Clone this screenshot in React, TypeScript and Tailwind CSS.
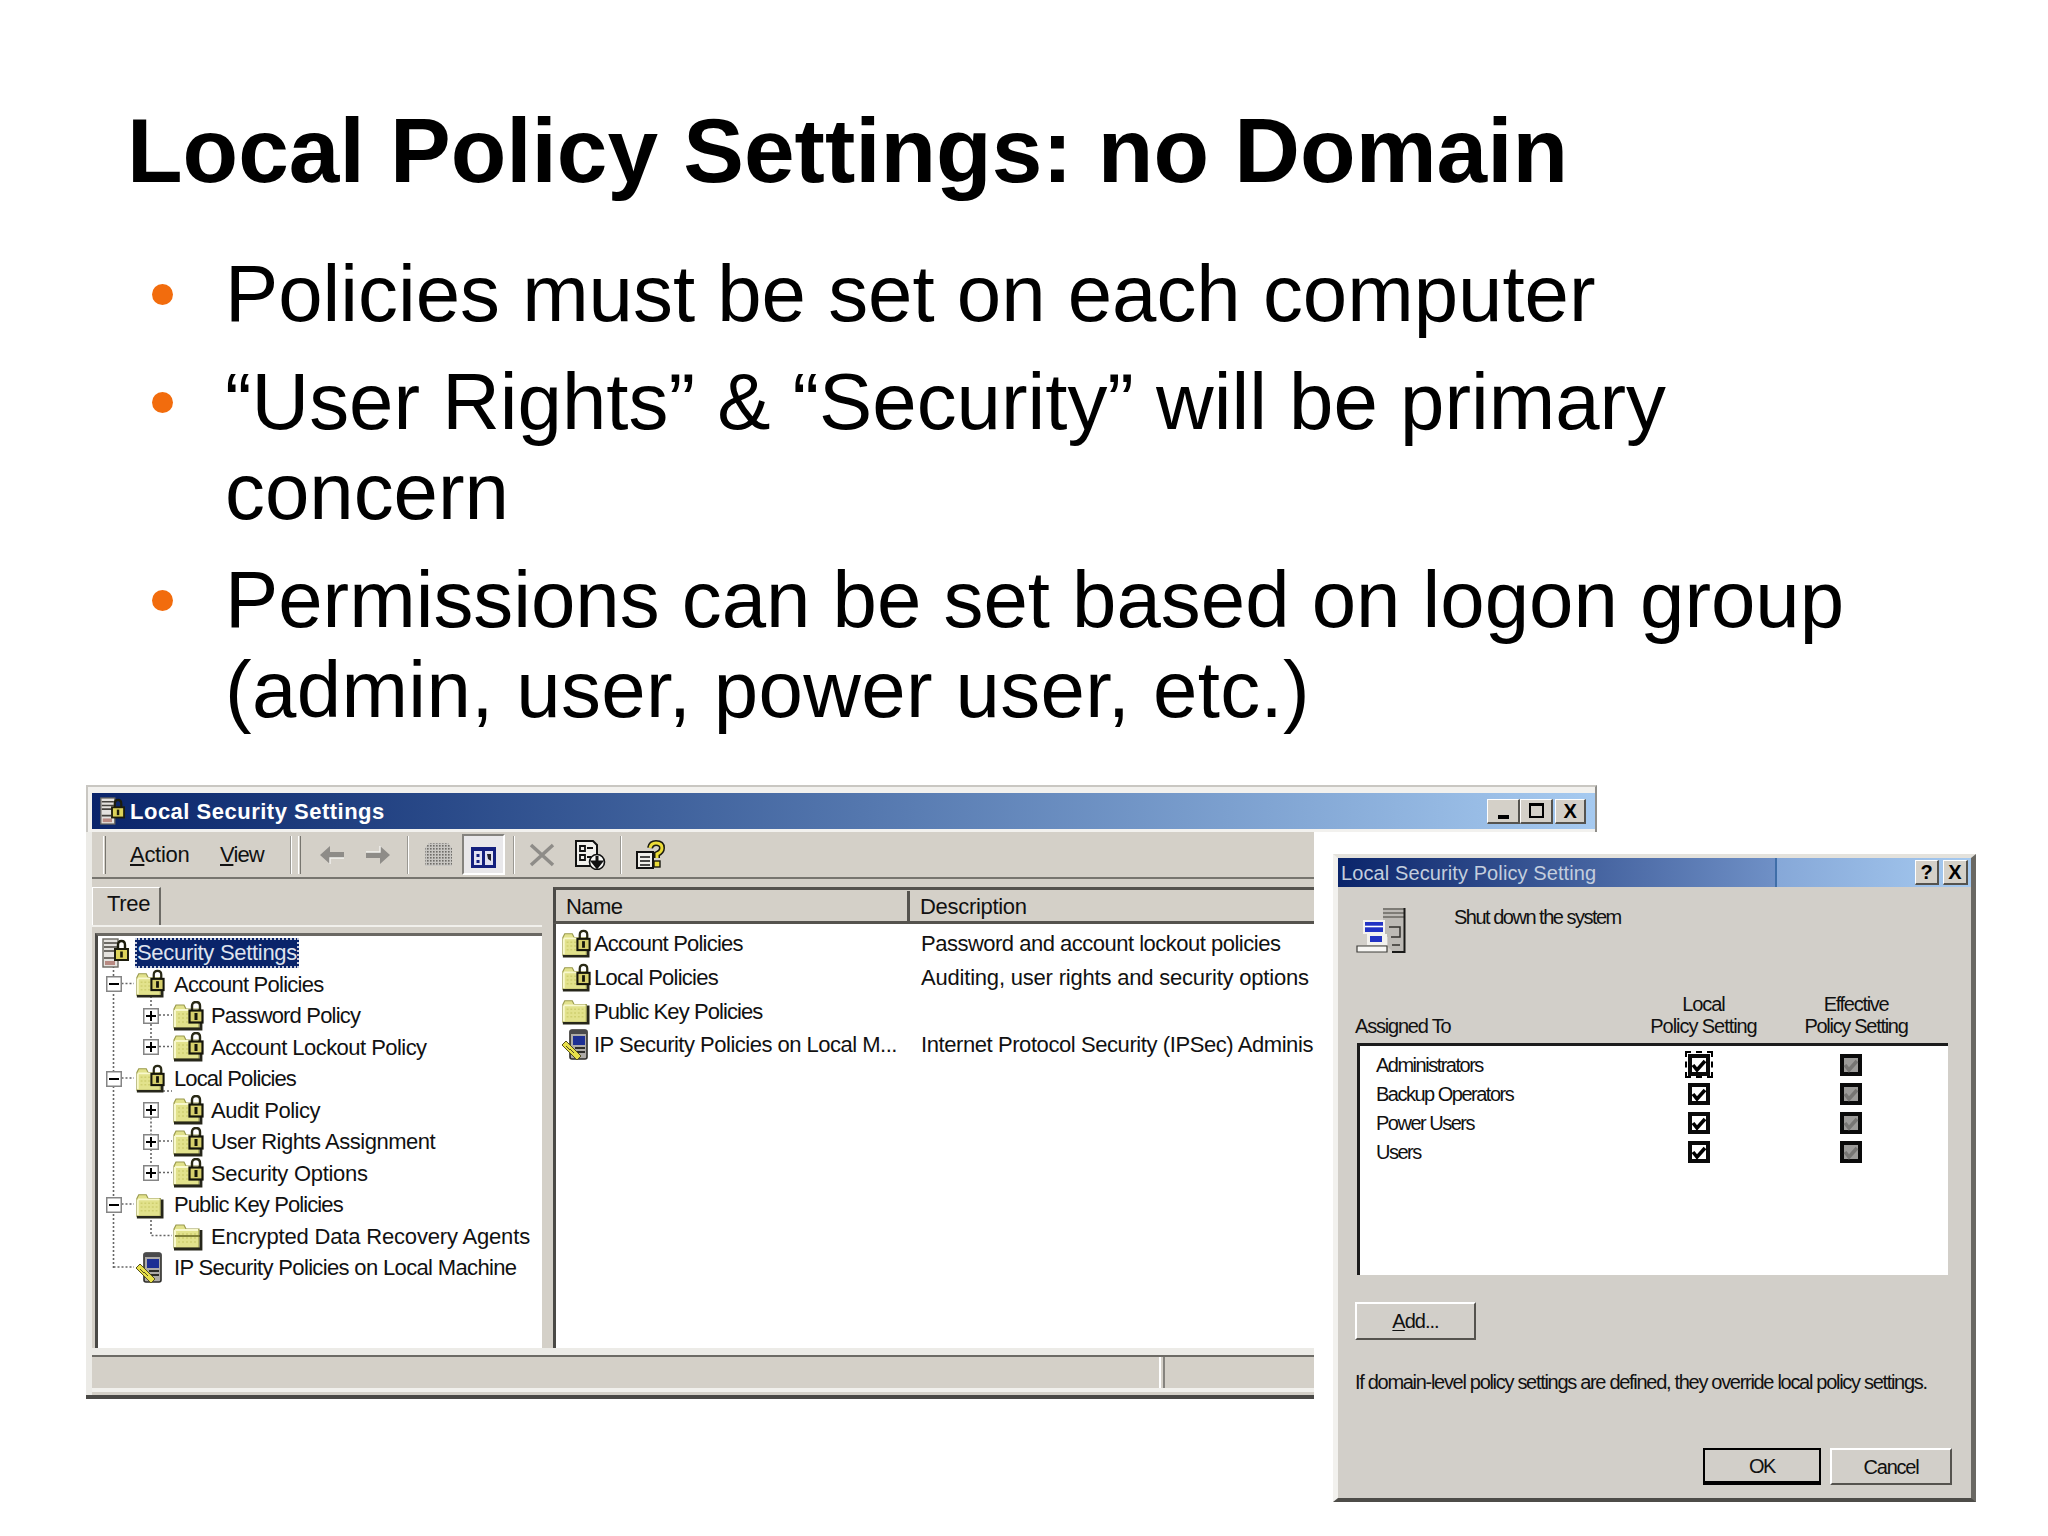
/**
 * Slide: Local Policy Settings, with two Windows 2000 dialogs pasted in as a picture
 */

const UI = "font-['Liberation_Sans',sans-serif]";

const Bullet = ({ children }: { children: React.ReactNode }) => (
  <li className="flex">
    <span className="mt-[35px] mr-[52px] h-[21px] w-[21px] shrink-0 rounded-full bg-[#f26c0d]" />
    <span className="w-[1720px]">{children}</span>
  </li>
);

const FolderIcon = ({ lock = false, open = false, w = 30 }: { lock?: boolean; open?: boolean; w?: number }) => (
  <svg width={w} height={30} viewBox="0 0 32 30" className="shrink-0">
    <path d="M2 8 L4 4 H12 L14 8 H27 V27 H2 Z" fill="#e2e28c" stroke="#9a9a4e" strokeWidth="1.2" />
    <path d="M3 9 H26 M3 9 V26" stroke="#f8f8cc" strokeWidth="2" />
    <path d="M6 13 H25 M6 17 H25 M6 21 H25" stroke="#cfcf70" strokeWidth="1.6" strokeDasharray="2 2" />
    {open && <path d="M3 15 H28" stroke="#77772f" strokeWidth="1.8" />}
    <path d="M2 28 H29 V9" fill="none" stroke="#26261a" strokeWidth="2.8" />
    {lock && (
      <>
        <path d="M20 10 V5 Q20 1 24 1 Q28 1 28 5 V10" fill="none" stroke="#2a2a16" strokeWidth="2.4" />
        <rect x="17.5" y="9.5" width="13" height="12" fill="#d6cf6c" stroke="#14140a" strokeWidth="2.2" />
        <rect x="22.5" y="12" width="3" height="7" fill="#14140a" />
      </>
    )}
  </svg>
);

const ServerIcon = ({ w = 28 }: { w?: number }) => (
  <svg width={w} height={32} viewBox="0 0 28 32" className="shrink-0">
    <rect x="2" y="2" width="15" height="28" fill="#e4e2de" stroke="#6a6862" strokeWidth="1.4" />
    <path d="M3 6 H16 M3 10 H16 M3 14 H16 M3 21 H13" stroke="#45433e" strokeWidth="1.7" />
    <rect x="4" y="24" width="10" height="4" fill="#b88a82" />
    <path d="M17 12 V8 Q17 4 20.5 4 Q24 4 24 8 V12" fill="none" stroke="#1c1c0c" strokeWidth="2.4" />
    <rect x="14" y="12" width="13" height="11" fill="#dcd35a" stroke="#1c1c0c" strokeWidth="2" />
    <rect x="19.2" y="14.5" width="2.6" height="6" fill="#1c1c0c" />
  </svg>
);

const IpSecIcon = () => (
  <svg width={30} height={34} viewBox="0 0 30 34" className="shrink-0">
    <rect x="9" y="2" width="17" height="29" rx="2" fill="#aeaba7" stroke="#2e2d2a" strokeWidth="1.6" />
    <rect x="9" y="2" width="17" height="4" fill="#4a4a4c" />
    <rect x="12" y="8" width="12" height="9" fill="#1d2f94" />
    <path d="M14 20 H24 M16 24 H24" stroke="#2e2d2a" strokeWidth="1.8" />
    <path d="M1 17 L5 13 L20 28 L16 32 Z" fill="#e8e04a" stroke="#55501c" strokeWidth="1" />
    <path d="M5 18 L9 22 M9 21 L13 25" stroke="#55501c" strokeWidth="1" />
  </svg>
);

const Expander = ({ plus = false }: { plus?: boolean }) => (
  <svg width={16} height={16} viewBox="0 0 16 16" className="relative z-10 shrink-0 bg-white">
    <rect x="0.75" y="0.75" width="14.5" height="14.5" fill="none" stroke="#858585" strokeWidth="1.5" />
    <path d="M3 8 H13" stroke="#000" strokeWidth="2" />
    {plus && <path d="M8 3 V13" stroke="#000" strokeWidth="2" />}
  </svg>
);

const Level1 = ({ icon, label, exp = true, track }: { icon: React.ReactNode; label: string; exp?: boolean; track: string }) => (
  <div className="flex h-[31.5px] items-center pl-[8px]">
    <span className="mr-[13px] w-[16px]">{exp && <Expander />}</span>
    <span className="relative z-10 w-[30px]">{icon}</span>
    <span className={`ml-[9px] whitespace-nowrap ${track}`}>{label}</span>
  </div>
);

const Level2 = ({ label, exp = true, open = false, track }: { label: string; exp?: boolean; open?: boolean; track: string }) => (
  <div className="flex h-[31.5px] items-center pl-[45px]">
    <span className="mr-[13px] w-[16px]">{exp && <Expander plus />}</span>
    <span className="relative z-10">
      <FolderIcon lock={!open} open={open} w={32} />
    </span>
    <span className={`ml-[7px] whitespace-nowrap ${track}`}>{label}</span>
  </div>
);

const TreeLines = () => (
  <svg width={120} height={340} className="absolute left-0 top-0" fill="none" stroke="#666" strokeDasharray="2 2" strokeWidth="1.6">
    <path d="M15.5 30 V332 M15.5 47.5 H36 M15.5 142 H36 M15.5 268 H36 M15.5 331 H36" />
    <path d="M53 60 V110 M53 79 H74 M53 110.5 H74 M53 155 H74 M53 205 V236 M53 173.5 V205 M53 205 H74 M53 236.5 H74 M53 284 V299.5 H74" />
  </svg>
);

const ListRow = ({ icon, name, desc, nameTrack, descTrack = '' }: { icon: React.ReactNode; name: string; desc?: string; nameTrack: string; descTrack?: string }) => (
  <div className="flex h-[33.7px] items-center pl-[5px]">
    <span className="w-[33px] shrink-0">{icon}</span>
    <span className={`w-[327px] shrink-0 whitespace-nowrap ${nameTrack}`}>{name}</span>
    <span className={`whitespace-nowrap ${descTrack}`}>{desc}</span>
  </div>
);

const Sep = ({ ml }: { ml: string }) => (
  <span className={`${ml} h-[38px] w-[2px] shrink-0 border-l border-r border-l-[#9a9892] border-r-white`} />
);

const Arrow = ({ flip = false, ml }: { flip?: boolean; ml: string }) => (
  <svg width={26} height={22} viewBox="0 0 26 22" className={`${ml} shrink-0 ${flip ? 'rotate-180' : ''}`}>
    <path d="M1 11 L11 2 V8 H25 V14 H11 V20 Z" fill="#8e8c88" />
    <path d="M11 20 V14 H25" fill="none" stroke="#f4f3f0" strokeWidth="1.4" />
  </svg>
);

const CapButton = ({ children, w }: { children: React.ReactNode; w: string }) => (
  <span className={`${w} flex h-[25px] items-center justify-center border-t border-l border-b-2 border-r-2 border-t-white border-l-white border-b-[#55534e] border-r-[#55534e] bg-[#d4d0c8] text-[20px] leading-none font-bold text-black`}>
    {children}
  </span>
);

const Check = ({ grey = false }: { grey?: boolean }) => (
  <svg width={22} height={22} viewBox="0 0 22 22" className="shrink-0">
    <rect x="2" y="2" width="18" height="18" fill={grey ? '#9c9b99' : '#ffffff'} stroke="#0a0a0a" strokeWidth="4" />
    <path d="M5 11 L9 16 L17 7" fill="none" stroke={grey ? '#777674' : '#000000'} strokeWidth="3.6" />
  </svg>
);

const DialogRow = ({ label, focus = false }: { label: string; focus?: boolean }) => (
  <div className="flex h-[29px] items-center pl-[16px]">
    <span className="w-[309px] whitespace-nowrap">{label}</span>
    <span className={`flex h-[27px] w-[28px] items-center justify-center ${focus ? 'border-2 border-dashed border-black' : ''}`}>
      <Check />
    </span>
    <span className="ml-[127px]">
      <Check grey />
    </span>
  </div>
);

const Dialog = () => (
  <div className={`${UI} absolute left-[1247px] top-[69px] flex h-[648px] w-[643px] flex-col border-t-[4px] border-l-[5px] border-b-[4px] border-r-[5px] border-t-[#e4e2dc] border-l-[#f2f1ee] border-b-[#4d4c48] border-r-[#6a6863] bg-[#d2cfc9] text-[20px] text-[#111] tracking-[-1.5px]`}>
    <div className="flex h-[29px] shrink-0 items-center bg-[linear-gradient(90deg,#0a246a_0%,#6f90c6_69%,#3f6ea8_69%,#3f6ea8_69.3%,#86a8d8_69.4%,#a6caf0_100%)] pl-[3px] pr-[3px]">
      <span className="flex-1 whitespace-nowrap text-[20px] text-[#c3cede] tracking-[0.1px]">Local Security Policy Setting</span>
      <CapButton w="w-[24px] mr-[4px] tracking-normal">?</CapButton>
      <CapButton w="w-[25px] tracking-normal">X</CapButton>
    </div>
    <div className="flex h-[83px] shrink-0 items-start pl-[17px] pt-[20px]">
      <svg width={52} height={50} viewBox="0 0 52 50" className="shrink-0">
        <path d="M28 1 H50 V44 H37 L33 40 V30 H28 Z" fill="#bdbab5" />
        <path d="M28 2 H49 M28 6 H49 M28 10 H49" stroke="#6a6862" strokeWidth="1.6" />
        <path d="M49.5 1 V45 H37" fill="none" stroke="#1a1a18" strokeWidth="2" />
        <path d="M34 20 H45 V30 H36 M37 38 H45" fill="none" stroke="#33322e" strokeWidth="1.5" />
        <path d="M8 13 H30 V27 H8 Z M12 27 H32 V38 H12 Z" fill="#f3f2ee" />
        <path d="M10 15 H28 V25 H10 Z M15 29 H27 V35 H15 Z" fill="#2233c4" />
        <path d="M10 19.5 H28" stroke="#fff" strokeWidth="1.6" />
        <path d="M2 39 H32 V45 H2 Z" fill="#f7f6f3" stroke="#3f3e3a" strokeWidth="1.2" />
      </svg>
      <span className="ml-[47px] mt-[-5px] whitespace-nowrap">Shut down the system</span>
    </div>
    <div className="flex h-[73px] shrink-0 pl-[17px] text-center leading-[22px]">
      <span className="w-[292px] self-end pb-[6px] text-left whitespace-nowrap tracking-[-1.2px]">Assigned To</span>
      <span className="w-[113px] self-end pb-[6px] whitespace-nowrap tracking-[-1.06px]">
        Local
        <br />
        Policy Setting
      </span>
      <span className="ml-[40px] w-[112px] self-end pb-[6px] whitespace-nowrap tracking-[-1.3px]">
        Effective
        <br />
        Policy Setting
      </span>
    </div>
    <div className="ml-[19px] mr-[23px] h-[232px] shrink-0 border-t-[3px] border-l-[3px] border-t-[#1c1c1c] border-l-[#1c1c1c] bg-white pt-[4px]">
      <DialogRow label="Administrators" focus />
      <DialogRow label="Backup Operators" />
      <DialogRow label="Power Users" />
      <DialogRow label="Users" />
    </div>
    <div className="ml-[17px] mt-[27px] flex h-[38px] w-[121px] shrink-0 items-center justify-center border-t-2 border-l-2 border-b-2 border-r-2 border-t-white border-l-white border-b-[#55534e] border-r-[#55534e] tracking-[-1px]">
      <span className="underline decoration-1 underline-offset-2">A</span>dd...
    </div>
    <div className="ml-[17px] mt-[27px] whitespace-nowrap tracking-[-1.3px]">If domain-level policy settings are defined, they override local policy settings.</div>
    <div className="mt-[51px] flex shrink-0 pl-[365px]">
      <span className="flex h-[37px] w-[118px] items-center justify-center border-2 border-b-4 border-black">OK</span>
      <span className="ml-[9px] flex h-[37px] w-[122px] items-center justify-center border-t-2 border-l-2 border-b-2 border-r-2 border-t-white border-l-white border-b-[#55534e] border-r-[#55534e] tracking-[-1.2px]">Cancel</span>
    </div>
  </div>
);

const Window = () => (
  <div className={`${UI} w-[1511px] text-[22px] text-[#111] tracking-[-0.3px]`}>
    {/* caption stretches past the part of the window the dialog's white margin hides */}
    <div className="border-t-2 border-l-2 border-r-2 border-t-[#c9c7c2] border-l-[#c9c7c2] border-r-[#8f8e8a] bg-[#f2f1ee] pl-[4px] pt-[6px] pb-[3px]">
      <div className="flex h-[36px] items-center bg-gradient-to-r from-[#0a246a] to-[#a6caf0] pl-[7px] pr-[9px] text-white">
        <ServerIcon w={26} />
        <span className="ml-[5px] flex-1 whitespace-nowrap font-bold tracking-[0.5px]">Local Security Settings</span>
        <CapButton w="w-[33px]">
          <span className="mt-[12px] h-[4px] w-[11px] bg-black" />
        </CapButton>
        <CapButton w="w-[33px]">
          <span className="h-[15px] w-[15px] border-2 border-t-[3px] border-black" />
        </CapButton>
        <CapButton w="w-[31px] ml-[2px]">X</CapButton>
      </div>
    </div>
    <div className="w-[1228px] border-b-[4px] border-b-[#4a4946]">
      <div className="border-l-[6px] border-l-[#ecebe7] bg-[#d4d0c8]">
        {/* toolbar */}
        <div className="flex h-[47px] items-center border-b-2 border-b-[#77756f]">
          <span className="ml-[11px] h-[38px] w-[3px] border-l border-r border-l-white border-r-[#77756f]" />
          <span className="ml-[24px] w-[58px]"><span className="underline underline-offset-2">A</span>ction</span>
          <span className="ml-[32px] w-[43px] tracking-[-0.9px]"><span className="underline underline-offset-2">V</span>iew</span>
          <Sep ml="ml-[27px]" />
          <span className="ml-[6px] h-[38px] w-[3px] border-l border-r border-l-white border-r-[#77756f]" />
          <Arrow ml="ml-[18px]" />
          <Arrow flip ml="ml-[20px]" />
          <Sep ml="ml-[16px]" />
          <svg width={29} height={25} viewBox="0 0 29 25" className="ml-[15px] shrink-0">
            <defs>
              <pattern id="dots" width="3" height="3" patternUnits="userSpaceOnUse">
                <rect width="3" height="3" fill="#c8c6c2" />
                <rect width="1.6" height="1.6" fill="#6e6c68" />
              </pattern>
            </defs>
            <path d="M1 6 L5 1 H24 L28 6 V24 H1 Z" fill="url(#dots)" />
          </svg>
          <span className="ml-[9px] flex h-[41px] w-[43px] shrink-0 items-center justify-center border-t-2 border-l-2 border-t-[#85837e] border-l-[#85837e] border-r-2 border-b-2 border-r-white border-b-white bg-[#e9e8ea]">
            <svg width={27} height={23} viewBox="0 0 27 23" className="mt-[5px]">
              <rect x="1" y="1" width="25" height="21" fill="#14207e" />
              <rect x="4" y="5" width="8" height="14" fill="#e2e2f2" />
              <rect x="15" y="5" width="8" height="14" fill="#e2e2f2" />
              <path d="M6.5 8 h3 v3 h-3 Z M6.5 14 h3 v3 h-3 Z" fill="#14207e" />
              <path d="M17 8 h4 v7 l-3 -2 Z" fill="#23232e" />
            </svg>
          </span>
          <Sep ml="ml-[8px]" />
          <svg width={26} height={24} viewBox="0 0 26 24" className="ml-[14px] shrink-0">
            <path d="M2 2 L24 22 M24 2 L2 22" stroke="#8e8c88" strokeWidth="3.5" />
          </svg>
          <svg width={32} height={30} viewBox="0 0 32 30" className="ml-[19px] shrink-0">
            <path d="M2 1 H19 L23 5 V26 H2 Z" fill="#f1f0ec" stroke="#111" strokeWidth="2" />
            <path d="M6 6 H11 V11 H6 Z M6 15 H11 V20 H6 Z" fill="none" stroke="#111" strokeWidth="1.8" />
            <path d="M13 8 H19 M13 17 H17" stroke="#111" strokeWidth="1.8" />
            <circle cx="23" cy="22" r="7.5" fill="#f7f7f4" stroke="#111" strokeWidth="1.6" />
            <path d="M23 16 V25 M19 22 L23 27 L27 22 Z" stroke="#111" strokeWidth="3" fill="#111" />
          </svg>
          <Sep ml="ml-[14px]" />
          <svg width={29} height={30} viewBox="0 0 29 30" className="ml-[14px] shrink-0">
            <path d="M1 12 H17 V28 H1 Z" fill="#f1f0ec" stroke="#111" strokeWidth="2" />
            <path d="M4 17 H14 M4 21 H14 M4 25 H14" stroke="#111" strokeWidth="1.6" />
            <path d="M14 8 Q15 3 20 3 Q26 3 26 8 Q26 12 21 14 V18" fill="none" stroke="#1b1b10" strokeWidth="6" />
            <path d="M14 8 Q15 3 20 3 Q26 3 26 8 Q26 12 21 14 V18" fill="none" stroke="#ecdc38" strokeWidth="3" />
            <rect x="18" y="21" width="6" height="6" fill="#ecdc38" stroke="#1b1b10" strokeWidth="1.4" />
          </svg>
        </div>
        {/* panes */}
        <div className="flex h-[469px]">
          <div className="flex w-[450px] shrink-0 flex-col pt-[8px]">
            <div className="flex h-[38px] w-[69px] items-center border-t border-l border-r-2 border-t-white border-l-white border-r-[#6d6b66] pl-[14px] pb-[6px]">Tree</div>
            <div className="h-[8px] border-t-2 border-t-[#f1f0ec]" />
            <div className="relative ml-[3px] flex-1 border-t-[3px] border-l-[3px] border-t-[#6a6863] border-l-[#4a4946] bg-white pt-[1px]">
              <TreeLines />
              <div className="flex h-[31.5px] items-center pl-[3px]">
                <span className="relative z-10">
                  <ServerIcon />
                </span>
                <span className="ml-[6px] border-2 border-dotted border-[#c9cddc] bg-[#0a246a] leading-[26px] whitespace-nowrap text-[#dfe3ee]">Security Settings</span>
              </div>
              <Level1 icon={<FolderIcon lock />} label="Account Policies" track="tracking-[-0.75px]" />
              <Level2 label="Password Policy" track="tracking-[-0.82px]" />
              <Level2 label="Account Lockout Policy" track="tracking-[-0.54px]" />
              <Level1 icon={<FolderIcon lock />} label="Local Policies" track="tracking-[-0.9px]" />
              <Level2 label="Audit Policy" track="tracking-[-0.5px]" />
              <Level2 label="User Rights Assignment" track="tracking-[-0.48px]" />
              <Level2 label="Security Options" track="tracking-[-0.3px]" />
              <Level1 icon={<FolderIcon />} label="Public Key Policies" track="tracking-[-0.9px]" />
              <Level2 label="Encrypted Data Recovery Agents" exp={false} open track="tracking-[-0.17px]" />
              <Level1 icon={<IpSecIcon />} label="IP Security Policies on Local Machine" exp={false} track="tracking-[-0.65px]" />
            </div>
          </div>
          <div className="ml-[11px] flex min-w-0 flex-1 flex-col pt-[8px]">
            <div className="flex h-[37px] shrink-0 border-t-[3px] border-b-[3px] border-l-[3px] border-t-[#55534e] border-b-[#55534e] border-l-[#4a4946] pt-[1px]">
              <span className="flex w-[354px] items-center border-r-[3px] border-r-[#55534e] pl-[10px] tracking-[-0.6px]">Name</span>
              <span className="flex items-center pl-[10px]">Description</span>
            </div>
            <div className="flex-1 overflow-hidden border-l-[3px] border-l-[#4a4946] bg-white pt-[3px]">
              <ListRow icon={<FolderIcon lock />} name="Account Policies" nameTrack="tracking-[-0.8px]" desc="Password and account lockout policies" descTrack="tracking-[-0.5px]" />
              <ListRow icon={<FolderIcon lock />} name="Local Policies" nameTrack="tracking-[-0.76px]" desc="Auditing, user rights and security options" descTrack="tracking-[-0.2px]" />
              <ListRow icon={<FolderIcon />} name="Public Key Policies" nameTrack="tracking-[-0.92px]" />
              <ListRow icon={<IpSecIcon />} name="IP Security Policies on Local M..." nameTrack="tracking-[-0.5px]" desc="Internet Protocol Security (IPSec) Adminis" descTrack="tracking-[-0.42px]" />
            </div>
          </div>
        </div>
        {/* status bar */}
        <div className="h-[9px] border-b-2 border-b-[#6d6b66] bg-[#ecebe7]" />
        <div className="flex h-[31px]">
          <span className="w-[1069px] border-r-2 border-r-white" />
          <span className="ml-[2px] flex-1 border-l-2 border-l-[#85837e]" />
        </div>
        <div className="h-[7px] border-t-[4px] border-t-[#f1f0ec] bg-[#d4d0c8]" />
      </div>
    </div>
  </div>
);

export default function App() {
  return (
    <div className="h-[1536px] w-[2048px] overflow-hidden bg-white pt-[105px] font-['Liberation_Sans',sans-serif] text-black">
      <h1 className="ml-[127px] text-[91px] leading-none font-bold whitespace-nowrap">Local Policy Settings: no Domain</h1>
      <ul className="mt-[53px] flex flex-col gap-[18px] pl-[152px] text-[79.8px] leading-[90px]">
        <Bullet>Policies must be set on each computer</Bullet>
        <Bullet>“User Rights” &amp; “Security” will be primary concern</Bullet>
        <Bullet>
          Permissions can be set based on logon group <span className="tracking-[0.38px]">(admin, user, power user, etc.)</span>
        </Bullet>
      </ul>
      <div className="relative ml-[86px] mt-[50px]">
        <Window />
        <Dialog />
      </div>
    </div>
  );
}
